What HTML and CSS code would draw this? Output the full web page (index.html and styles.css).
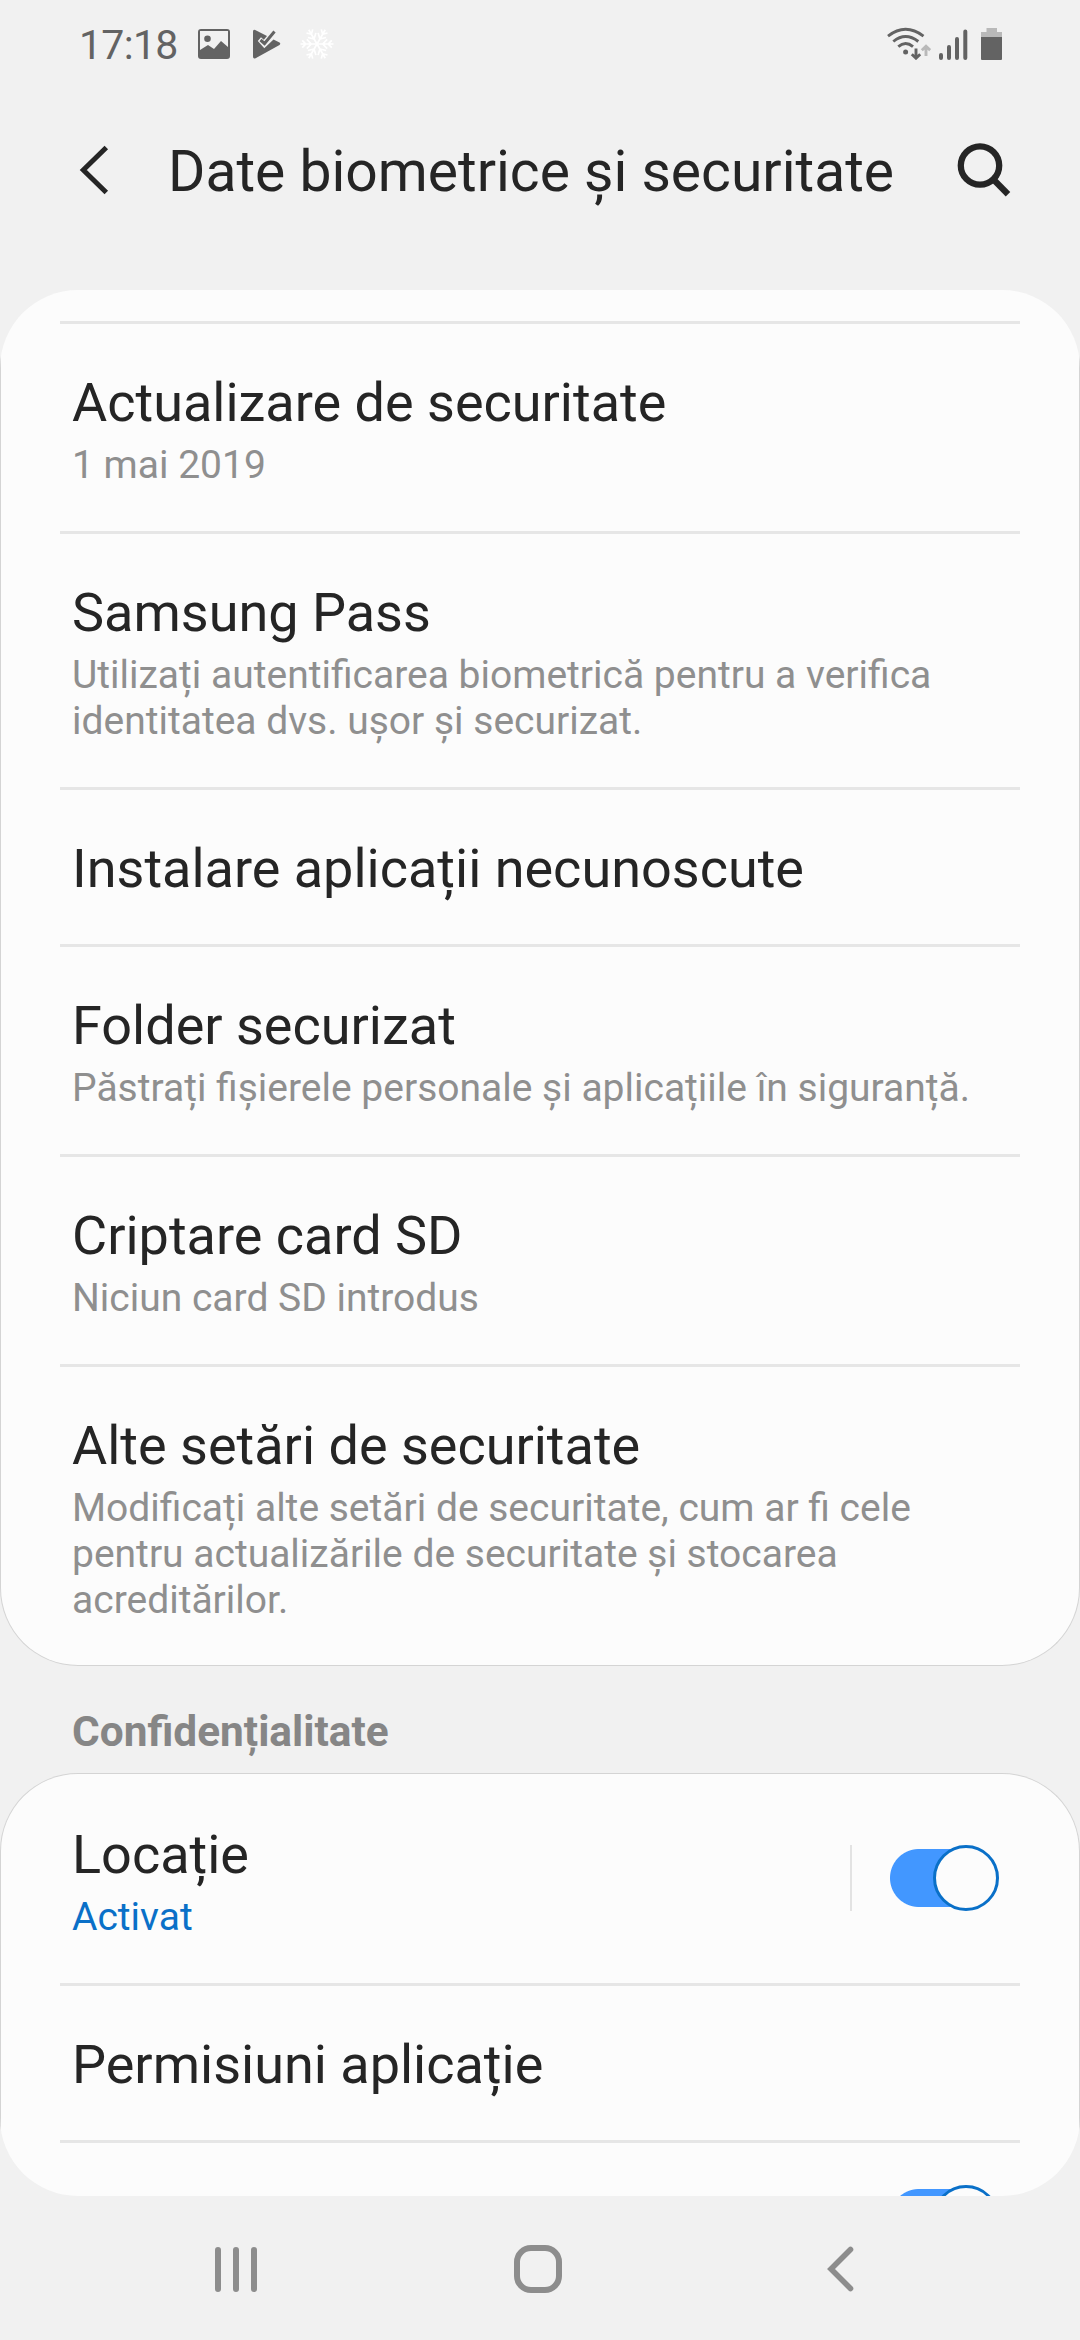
FILE: index.html
```html
<!DOCTYPE html>
<html lang="ro">
<head>
<meta charset="utf-8">
<title>Date biometrice și securitate</title>
<link rel="stylesheet" href="styles.css">
</head>
<body>
<div class="screen">
  <div class="status">
    <span class="clock">17:18</span>
    <svg class="st-image" width="32" height="30" viewBox="0 0 32 30"><path fill="#636363" fill-rule="evenodd" d="M3 0h26a3 3 0 0 1 3 3v24a3 3 0 0 1-3 3H3a3 3 0 0 1-3-3V3a3 3 0 0 1 3-3zM2 2v19l8-5 6 4 7-8 7 6V2zM9.500 6.500a3.300 3.300 0 1 1 0 6.600 3.300 3.300 0 0 1 0-6.600z"/></svg>
    <svg class="st-play" width="28" height="30" viewBox="0 0 28 30"><path fill="#636363" d="M0 2.500Q0 .2 2.200 1L14 7 10.800 10.800 8 8.300 4.800 12 11.300 19.200 20.500 10.400 26.500 13.600Q28 14.800 26.500 16L3 29Q0 30.500 0 27.500z"/><path fill="none" stroke="#636363" stroke-width="3" d="M7.500 11 11.500 14.500 21.500 2.500"/></svg>
    <svg class="st-snow" width="34" height="32" viewBox="-17 -16 34 32"><defs><g id="arm"><path d="M0 0V-16.500M-3.600-14.800 0-11.200 3.600-14.800M-4.600-10.200 0-5.800 4.600-10.200"/></g></defs><g fill="none" stroke="#fff" stroke-width="1.700"><use href="#arm" transform="rotate(30)"/><use href="#arm" transform="rotate(90)"/><use href="#arm" transform="rotate(150)"/><use href="#arm" transform="rotate(210)"/><use href="#arm" transform="rotate(270)"/><use href="#arm" transform="rotate(330)"/></g></svg>
    <svg class="st-wifi" width="44" height="33" viewBox="887 27 44 33"><g fill="none" stroke="#636363" stroke-width="2.900"><path d="M888 36.200Q905.500 22.500 923.500 36.200M893.300 41.500Q905.500 31.500 918.300 41.500M898.300 46.700Q905.500 40.500 913 46.700"/><path d="M916 48.500V58M911.800 54.300 916 58.200 920.200 54.300"/></g><circle cx="905.600" cy="52" r="2.500" fill="#636363"/><path d="M926 56V46.500M921.800 50.200 926 46.300 930.200 50.200" fill="none" stroke="#b9b9b9" stroke-width="2.900"/></svg>
    <svg class="st-signal" width="29" height="32" viewBox="939 28 29 32"><path stroke="#636363" stroke-width="4" stroke-linecap="round" d="M941 55V58M949 47V58M957 39V58M965.300 31.500V58"/></svg>
    <svg class="st-battery" width="21" height="32" viewBox="0 0 21 32"><path fill="#b9b9b9" d="M5.500 0h10.500v4h5v5H0V4h5.500z"/><path fill="#636363" d="M0 9h21v22a1 1 0 0 1-1 1H1a1 1 0 0 1-1-1z"/></svg>
  </div>

  <header class="appbar">
    <svg class="back" width="30" height="50" viewBox="79 145 30 50"><path fill="none" stroke="#252525" stroke-width="5" d="M106.300 147.500 83.300 170 106.300 192.500"/></svg>
    <h1 class="heading">Date biometrice și securitate</h1>
    <svg class="search" width="54" height="55" viewBox="957 142 54 55"><circle cx="980" cy="165.500" r="19.200" fill="none" stroke="#252525" stroke-width="6.300"/><path stroke="#252525" stroke-width="6.300" d="M993 179 1008 194.200"/></svg>
  </header>

  <main class="list">
    <section class="card card-first">
      <div class="row"><div class="title">Actualizare de securitate</div><div class="sub">1 mai 2019</div></div>
      <div class="row"><div class="title">Samsung Pass</div><div class="sub">Utilizați autentificarea biometrică pentru a verifica identitatea dvs. ușor și securizat.</div></div>
      <div class="row"><div class="title">Instalare aplicații necunoscute</div></div>
      <div class="row"><div class="title">Folder securizat</div><div class="sub">Păstrați fișierele personale și aplicațiile în siguranță.</div></div>
      <div class="row"><div class="title">Criptare card SD</div><div class="sub">Niciun card SD introdus</div></div>
      <div class="row"><div class="title">Alte setări de securitate</div><div class="sub">Modificați alte setări de securitate, cum ar fi cele pentru actualizările de securitate și stocarea acreditărilor.</div></div>
    </section>
    <h2 class="section">Confidențialitate</h2>
    <section class="card card-last">
      <div class="row row-switch">
        <div><div class="title">Locație</div><div class="sub active">Activat</div></div>
        <div class="control"><span class="rule"></span><span class="switch"><span class="knob"></span></span></div>
      </div>
      <div class="row"><div class="title">Permisiuni aplicație</div></div>
      <div class="row row-cut"><span class="switch"><span class="knob"></span></span></div>
    </section>
  </main>

  <nav class="navbar">
    <svg class="nav-recent" width="42" height="45" viewBox="0 0 42 45"><path stroke="#8d8d8d" stroke-width="6" stroke-linecap="round" d="M3 3V42M21 3V42M39 3V42"/></svg>
    <svg class="nav-home" width="48" height="48" viewBox="0 0 48 48"><rect x="3" y="3" width="42" height="42" rx="14" fill="none" stroke="#8d8d8d" stroke-width="6"/></svg>
    <svg class="nav-back" width="27" height="46" viewBox="0 0 27 46"><path fill="none" stroke="#8d8d8d" stroke-width="5.600" stroke-linecap="round" d="M23.500 3.500 4 23 23.500 42.500"/></svg>
  </nav>
</div>
</body>
</html>
```
FILE: styles.css
```css
* { box-sizing: border-box; }
body { margin: 0; background: #f1f1f1; font-family: Roboto, "Noto Sans", sans-serif; color: #252525; }
svg { display: block; flex: none; }
h1, h2 { margin: 0; }
.screen { width: 1080px; height: 2340px; overflow: hidden; display: flex; flex-direction: column; background: #f1f1f1; }

.status { height: 88px; display: flex; align-items: flex-start; padding: 28px 78px 0 79px; flex: none; }
.clock { width: 119px; font-size: 41px; line-height: 48px; margin-top: -7px; letter-spacing: -0.7px; color: #636363; }
.st-image { margin-top: 1px; }
.st-play { margin: 1px 0 0 23px; }
.st-snow { margin-left: 19px; }
.st-wifi { margin: -1px 8px 0 auto; }
.st-battery { margin-left: 13px; }

.appbar { height: 202px; display: flex; align-items: flex-start; padding: 54px 69px 0 79px; flex: none; }
.back { margin-top: 3px; }
.heading { margin: -4px 0 0 59px; flex: 1; font-size: 57px; line-height: 67px; font-weight: 400; white-space: nowrap; }

.list { height: 1906px; flex: none; overflow: hidden; border-radius: 78px; display: flex; flex-direction: column; }
.card { background: #fcfcfc; border: 1px solid #d4d4d4; padding: 0 59px; flex: none; }
.card-first { border-top: 0; border-radius: 0 0 78px 78px; padding-top: 31px; height: 1376px; }
.card-last { border-bottom: 0; border-radius: 78px 78px 0 0; height: 423px; }
.row { border-top: 3px solid #e6e6e6; padding: 47px 12px 43px; }
.title { font-size: 54px; line-height: 64px; white-space: nowrap; }
.sub { margin-top: 7px; font-size: 39px; line-height: 46px; color: #8f8f8f; }
.active { color: #0a70c8; }
.section { height: 107px; padding: 41px 72px 0; font-size: 42.400px; line-height: 50px; font-weight: 700; color: #868686; flex: none; }

.row-switch { display: flex; justify-content: space-between; border-top: 0; padding: 49px 21px 43px 12px; }
.control { display: flex; align-items: center; height: 66px; margin-top: 22px; }
.rule { width: 2px; height: 66px; background: #e3e3e3; margin-right: 37px; }
.switch { display: flex; width: 110px; height: 66px; justify-content: flex-end; background: linear-gradient(#4297ff, #4297ff) 30px 4px / 50px 58px no-repeat, radial-gradient(circle 29px at 30px 33px, #4297ff 28.500px, transparent 29.500px); }
.knob { width: 66px; height: 66px; border: 3px solid #0a70c8; border-radius: 50%; background: #fcfcfc; }
.row-cut { display: flex; justify-content: flex-end; padding: 42px 21px 0 0; }

.navbar { flex: 1; display: flex; align-items: center; padding: 2px 226px 0 215px; justify-content: space-between; }
.nav-home { margin-left: -8px; }
```
